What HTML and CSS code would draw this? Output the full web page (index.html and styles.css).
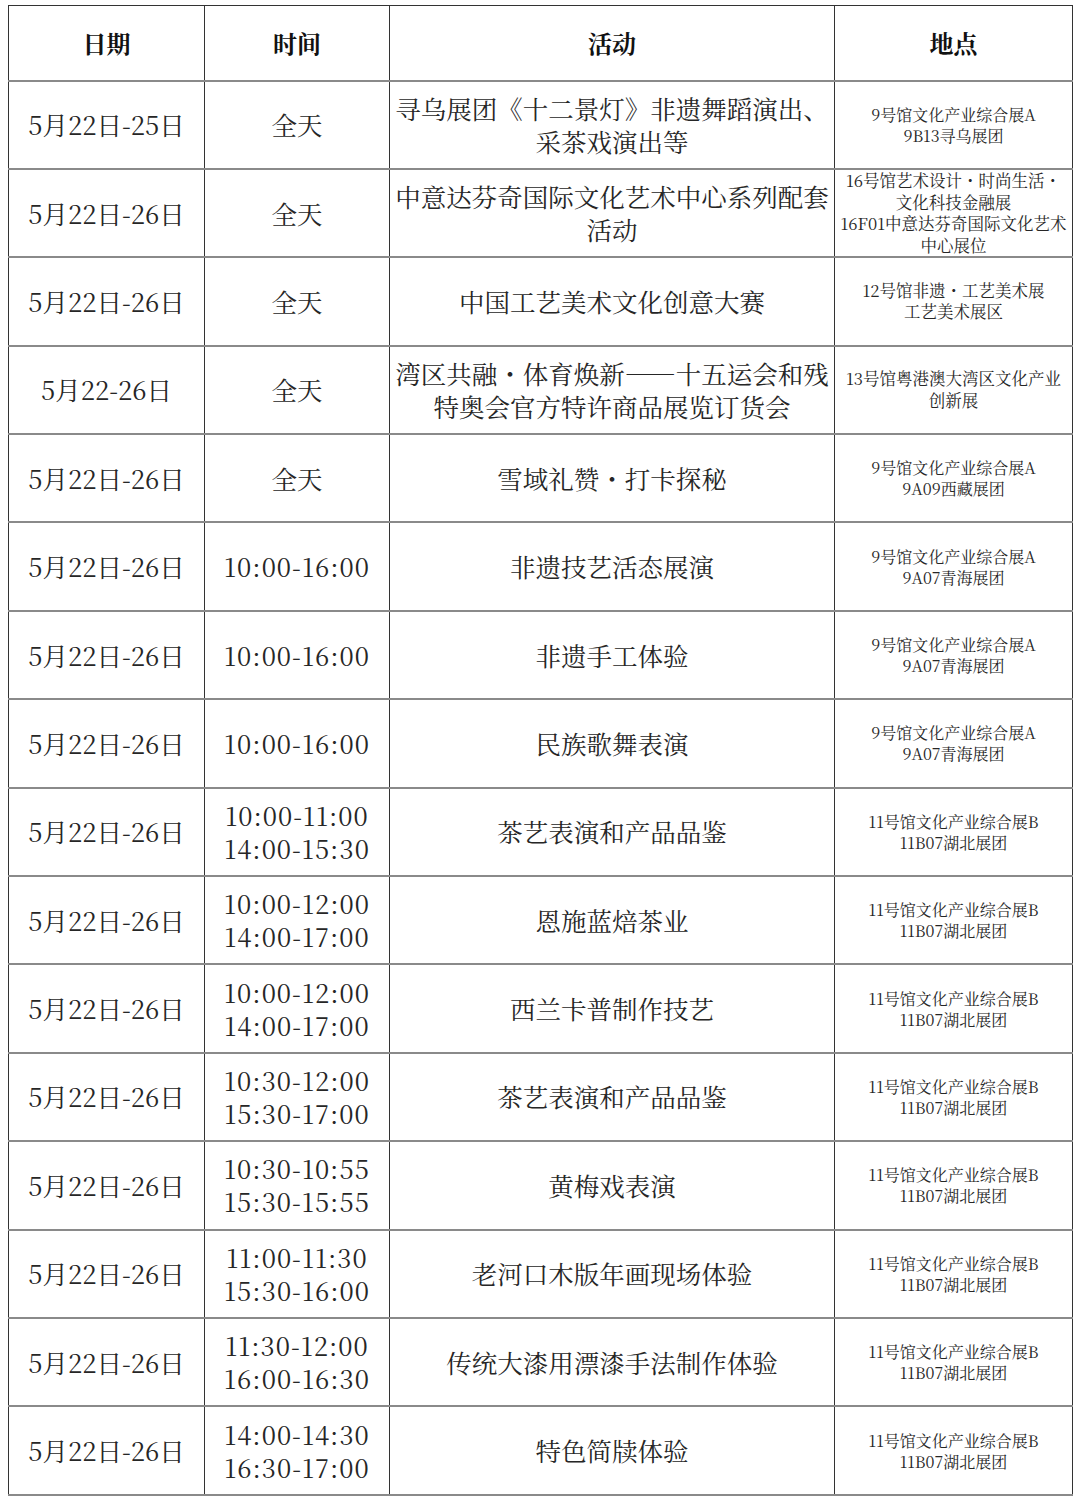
FILE: index.html
```html
<!DOCTYPE html>
<html lang="zh-CN">
<head>
<meta charset="utf-8">
<link rel="stylesheet" href="styles.css">
</head>
<body>
<table class="sched">
  <colgroup>
    <col class="c-date"><col class="c-time"><col class="c-act"><col class="c-loc">
  </colgroup>
  <thead>
    <tr class="head"><th>日期</th><th>时间</th><th>活动</th><th>地点</th></tr>
  </thead>
  <tbody>
    <tr><td class="date">5月22日-25日</td><td>全天</td><td class="act">寻乌展团《十二景灯》非遗舞蹈演出、<br>采茶戏演出等</td><td class="loc">9号馆文化产业综合展A<br>9B13寻乌展团</td></tr>
    <tr><td class="date">5月22日-26日</td><td>全天</td><td class="act">中意达芬奇国际文化艺术中心系列配套<br>活动</td><td class="loc wide">16号馆艺术设计・时尚生活・<br>文化科技金融展<br>16F01中意达芬奇国际文化艺术<br>中心展位</td></tr>
    <tr><td class="date">5月22日-26日</td><td>全天</td><td class="act">中国工艺美术文化创意大赛</td><td class="loc wide">12号馆非遗・工艺美术展<br>工艺美术展区</td></tr>
    <tr><td class="date">5月22-26日</td><td>全天</td><td class="act">湾区共融・体育焕新——十五运会和残<br>特奥会官方特许商品展览订货会</td><td class="loc wide">13号馆粤港澳大湾区文化产业<br>创新展</td></tr>
    <tr><td class="date">5月22日-26日</td><td>全天</td><td class="act">雪域礼赞・打卡探秘</td><td class="loc">9号馆文化产业综合展A<br>9A09西藏展团</td></tr>
    <tr><td class="date">5月22日-26日</td><td class="time">10:00-16:00</td><td class="act">非遗技艺活态展演</td><td class="loc">9号馆文化产业综合展A<br>9A07青海展团</td></tr>
    <tr><td class="date">5月22日-26日</td><td class="time">10:00-16:00</td><td class="act">非遗手工体验</td><td class="loc">9号馆文化产业综合展A<br>9A07青海展团</td></tr>
    <tr><td class="date">5月22日-26日</td><td class="time">10:00-16:00</td><td class="act">民族歌舞表演</td><td class="loc">9号馆文化产业综合展A<br>9A07青海展团</td></tr>
    <tr><td class="date">5月22日-26日</td><td class="time">10:00-11:00<br>14:00-15:30</td><td class="act">茶艺表演和产品品鉴</td><td class="loc">11号馆文化产业综合展B<br>11B07湖北展团</td></tr>
    <tr><td class="date">5月22日-26日</td><td class="time">10:00-12:00<br>14:00-17:00</td><td class="act">恩施蓝焙茶业</td><td class="loc">11号馆文化产业综合展B<br>11B07湖北展团</td></tr>
    <tr><td class="date">5月22日-26日</td><td class="time">10:00-12:00<br>14:00-17:00</td><td class="act">西兰卡普制作技艺</td><td class="loc">11号馆文化产业综合展B<br>11B07湖北展团</td></tr>
    <tr><td class="date">5月22日-26日</td><td class="time">10:30-12:00<br>15:30-17:00</td><td class="act">茶艺表演和产品品鉴</td><td class="loc">11号馆文化产业综合展B<br>11B07湖北展团</td></tr>
    <tr><td class="date">5月22日-26日</td><td class="time">10:30-10:55<br>15:30-15:55</td><td class="act">黄梅戏表演</td><td class="loc">11号馆文化产业综合展B<br>11B07湖北展团</td></tr>
    <tr><td class="date">5月22日-26日</td><td class="time">11:00-11:30<br>15:30-16:00</td><td class="act">老河口木版年画现场体验</td><td class="loc">11号馆文化产业综合展B<br>11B07湖北展团</td></tr>
    <tr><td class="date">5月22日-26日</td><td class="time">11:30-12:00<br>16:00-16:30</td><td class="act">传统大漆用漂漆手法制作体验</td><td class="loc">11号馆文化产业综合展B<br>11B07湖北展团</td></tr>
    <tr><td class="date">5月22日-26日</td><td class="time">14:00-14:30<br>16:30-17:00</td><td class="act">特色简牍体验</td><td class="loc">11号馆文化产业综合展B<br>11B07湖北展团</td></tr>
  </tbody>
</table>
</body>
</html>
```
FILE: styles.css
```css
html, body {
  margin: 0;
  background: #ffffff;
}
body {
  padding: 5px 8px 0 8px;
  font-family: "Noto Serif CJK SC", "Noto Sans CJK SC", "Liberation Serif", serif;
  color: #262626;
}
.sched {
  border-collapse: collapse;
  width: 1064px;
  table-layout: fixed;
}
.c-date { width: 196px; }
.c-time { width: 185px; }
.c-act { width: 445px; }
.c-loc { width: 238px; }
.sched th,
.sched td {
  border-top: 2px solid #8a8a8a;
  border-bottom: 2px solid #8a8a8a;
  border-left: 1px solid #333333;
  border-right: 1px solid #333333;
  text-align: center;
  vertical-align: middle;
  padding: 0;
  font-weight: 400;
  font-size: 25.5px;
  line-height: 33px;
  white-space: nowrap;
}
.sched thead th {
  border-top: 1px solid #333333;
  font-weight: 700;
  font-size: 24px;
  color: #111111;
}
.head { height: 75px; }
.sched tbody tr { height: 88.4px; }
.sched td.time {
  letter-spacing: 1px;
}
.sched td.loc {
  font-size: 16px;
  line-height: 21px;
}
.sched td.loc.wide {
  font-size: 16.5px;
  line-height: 21.5px;
}
```
